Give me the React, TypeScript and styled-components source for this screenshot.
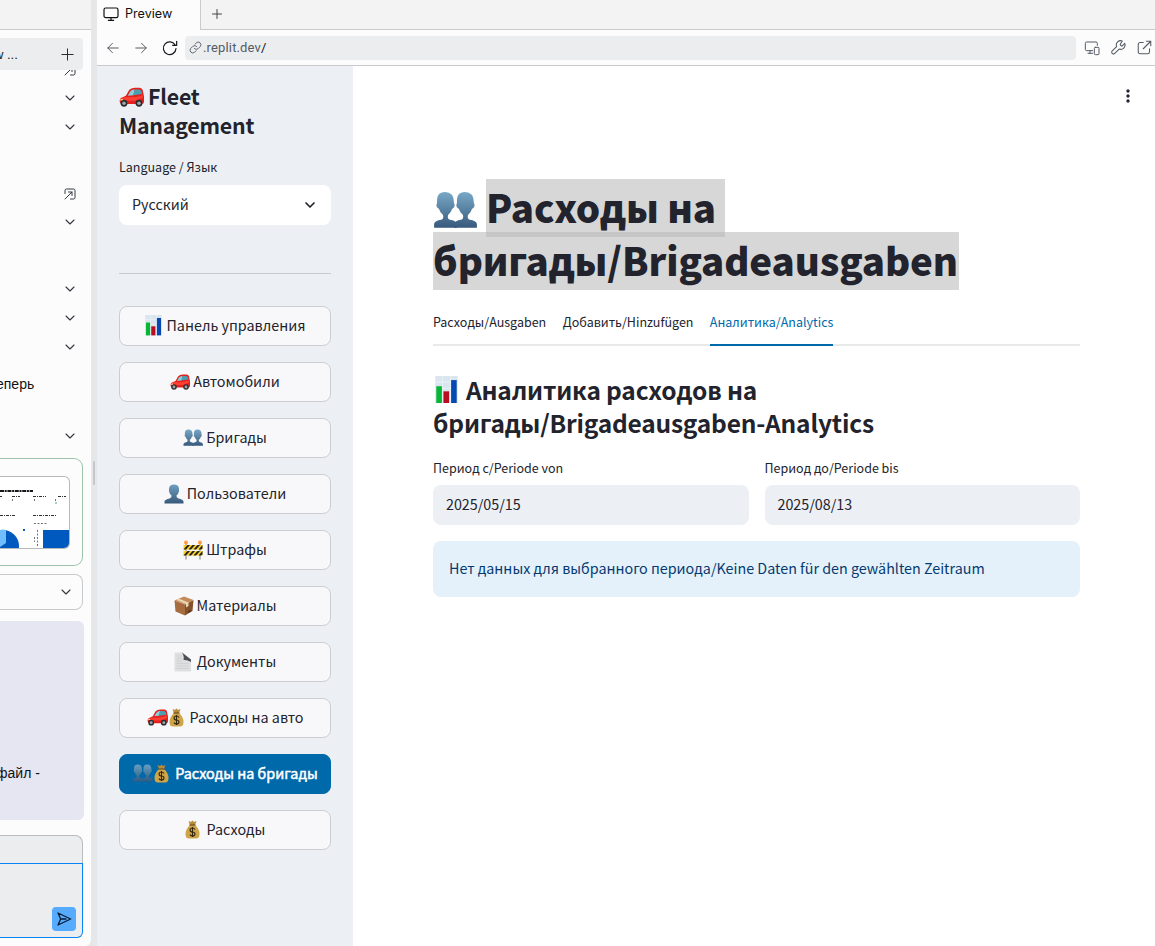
import React from "react";
import styled, { createGlobalStyle, css } from "styled-components";

const sans = `"Noto Sans CJK SC", sans-serif`;

const Global = createGlobalStyle`
  * { box-sizing: border-box; }
  body { margin: 0; background: #fff; overflow: hidden; font-family: ${sans}; color: #22232c; }
  svg { display: block; flex: none; }
`;

const Page = styled.div`display: flex; width: 1155px; height: 946px; background: #e5e7e9; overflow: hidden;`;

/* Chat column */
const Chat = styled.aside`width: 91px; height: 946px; background: #fcfcfc; border-bottom-right-radius: 6px; display: flex; flex-direction: column; overflow: hidden; font-family: "Liberation Sans", sans-serif; color: #111;`;
const ChatTop = styled.div`height: 30px; background: #f3f3f3; border-bottom: 1px solid #c9cacb; flex: none;`;
const ChatHeader = styled.div`margin-top: 8px; width: 83px; height: 32px; flex: none; background: #ecedef; border-radius: 0 4px 4px 0; display: flex; align-items: center; justify-content: space-between; padding-right: 8px; font-size: 13px; color: #222;`;
const Clipped = styled.span`margin-left: -6px; white-space: nowrap;`;
const Feed = styled.div`display: flex; flex-direction: column; height: 388px; flex: none; overflow: hidden;`;
const FeedItem = styled.div<{ $top: number }>`margin-top: ${p => p.$top}px; height: 14px; flex: none; padding-right: 15px; display: flex; align-items: center; justify-content: flex-end; color: #333840;`;
const FeedText = styled.div`margin: 22px 0 0 -4px; height: 16px; flex: none; font-size: 14px; line-height: 16px; white-space: nowrap;`;
const Card = styled.div`width: 83px; height: 108px; flex: none; border: 1px solid #9dc4ab; border-left: 0; border-radius: 0 9px 9px 0; padding-top: 17px;`;
const Thumb = styled.div`width: 70px; height: 73px; border: 1px solid #b6b8ba; border-left: 0; border-radius: 0 6px 6px 0; background: #fff; overflow: hidden;`;
const Collapsed = styled.div`margin-top: 8px; width: 83px; height: 36px; flex: none; border: 1px solid #c9cacc; border-left: 0; border-radius: 0 8px 8px 0; display: flex; align-items: center; justify-content: flex-end; padding-right: 10px; color: #333840;`;
const Bubble = styled.div`margin-top: 11px; width: 84px; height: 199px; flex: none; background: #e6e5f2; border-radius: 0 6px 6px 0; padding-top: 144px; font-size: 14px; line-height: 16px; white-space: nowrap;`;
const BubbleText = styled.div`margin-left: -4px;`;
const Attach = styled.div`margin-top: 15px; width: 83px; height: 28px; flex: none; background: #ecedef; border: 1px solid #b9bbbd; border-width: 1px 1px 0 0; border-radius: 0 8px 0 0;`;
const Composer = styled.div`width: 83px; height: 75px; flex: none; background: #ecedef; border: 1px solid #0a84f5; border-left: 0; border-radius: 0 0 6px 0; display: flex; align-items: flex-end; justify-content: flex-end; padding: 0 6px 6px 0;`;
const Send = styled.div`width: 24px; height: 24px; border-radius: 4px; background: #57abff; display: grid; place-items: center; color: #0c1b30;`;

const Gutter = styled.div`width: 6px; height: 946px; flex: none; display: flex; align-items: center; justify-content: center;`;
const Grip = styled.i`width: 2px; height: 24px; border-radius: 1px; background: #c5c7ca;`;

/* Preview window */
const Preview = styled.section`flex: 1; display: flex; flex-direction: column; min-width: 0; background: #fff;`;
const TabStrip = styled.div`height: 30px; display: flex; background: #f3f3f3; flex: none; font-family: Inter, sans-serif; font-size: 12.6px; color: #111;`;
const WindowTab = styled.div`width: 104px; height: 30px; background: #fcfcfc; border-right: 1px solid #c9cacb; display: flex; align-items: center; padding: 0 0 3px 6px; gap: 6px;`;
const StripRest = styled.div`flex: 1; border-bottom: 1px solid #c9cacb; display: flex; padding: 8px 0 0 10px; color: #444;`;
const Toolbar = styled.div`height: 36px; flex: none; background: #fcfcfc; border-bottom: 1px solid #c9cacb; display: flex; align-items: center; color: #555b66;`;
const NavIcons = styled.div`width: 88px; display: flex; align-items: center; gap: 14px; padding-left: 9px;`;
const Address = styled.div`width: 891px; height: 24px; background: #ecedef; border-radius: 4px; display: flex; align-items: center; padding-left: 4px; gap: 1px; font: 400 13px Roboto, sans-serif; letter-spacing: .15px; color: #555b66;`;
const Slash = styled.b`font-weight: 400; color: #111;`;
const Tools = styled.div`display: flex; gap: 11px; padding-left: 8px;`;

const AppFrame = styled.div`display: flex; flex: 1; min-height: 0;`;
const Sidebar = styled.nav`width: 256px; background: #ecf0f5; padding: 15px 22px 0; display: flex; flex-direction: column; flex: none;`;
const Brand = styled.h2`margin: 0 0 18px; font-size: 21.3px; line-height: 29px; font-weight: 700; letter-spacing: -.2px;`;
const BrandRow = styled.div`display: flex; align-items: center; gap: 4px; height: 29px; white-space: nowrap;`;
const BrandIcon = styled.span`padding-top: 2px;`;
const Label = styled.div`font-size: 12.5px; line-height: 20px; height: 20px; white-space: nowrap;`;
const Select = styled.div`height: 40px; margin-top: 8px; background: #fff; border-radius: 8px; display: flex; align-items: center; justify-content: space-between; padding: 0 15px 0 13px; font-size: 14.3px; line-height: 38px;`;
const SelectValue = styled.span`height: 40px;`;
const Divider = styled.hr`width: 100%; border: 0; height: 1px; background: #c8ccd1; margin: 48px 0 32px;`;
const Menu = styled.div`display: flex; flex-direction: column; gap: 16px;`;
const MenuButton = styled.button<{ $active?: boolean; $gap?: number }>`
  height: 40px; width: 212px; padding: 0 0 1px; border-radius: 8px; border: 1px solid #cccdd1; background: #f8f8fb; color: #22232c;
  display: flex; align-items: center; justify-content: center; gap: ${p => p.$gap ?? 3}px; font: 400 14.35px/24px ${sans}; white-space: nowrap;
  ${p => p.$active && css`background: #0069aa; border-color: #0069aa; color: #fff; -webkit-text-stroke: .5px #fff;`}
`;
const ButtonText = styled.span`padding-bottom: 1px;`;
const Emojis = styled.span`display: flex; align-items: center; gap: 1px;`;

const Main = styled.main`flex: 1; padding: 113px 75px 0 80px; position: relative; min-width: 0;`;
const More = styled.div`position: absolute; right: 24px; top: 22px;`;
const Title = styled.h1`margin: 0; font-size: 38.4px; font-weight: 900; height: 111px;`;
const TitleLine = styled.div`display: flex; height: 53px; white-space: nowrap;`;
const TitleIcon = styled.span`width: 53px; padding-top: 12px;`;
const Selected = styled.span<{ $w: number; $joined?: boolean }>`
  width: ${p => p.$w}px; height: 58px; line-height: 54px; flex: none; letter-spacing: -.13px;
  background: ${p => p.$joined ? "linear-gradient(rgba(0,0,0,.157) 53px, rgba(0,0,0,.08) 53px)" : "rgba(0,0,0,.157)"};
`;
const Tabs = styled.div`display: flex; gap: 16.4px; border-bottom: 2px solid #e8e9eb; height: 40px; margin-top: 16px;`;
const Tab = styled.div<{ $active?: boolean }>`font-size: 12.5px; height: 40px; line-height: 32px; white-space: nowrap; border-bottom: 2px solid ${p => (p.$active ? "#0069aa" : "transparent")}; color: ${p => (p.$active ? "#0069aa" : "inherit")};`;
const Section = styled.h3`margin: 27px 0 0; font-size: 24.5px; line-height: 33px; font-weight: 700; white-space: nowrap; letter-spacing: -.19px;`;
const SectionRow = styled.div`display: flex; align-items: center; gap: 8px; height: 33px;`;
const SectionIcon = styled.span`padding-left: 2px;`;
const Fields = styled.div`display: grid; grid-template-columns: 1fr 1fr; gap: 16px; margin-top: 19px;`;
const Input = styled.div`margin-top: 7px; height: 40px; background: #eceff4; border-radius: 8px; padding: 0 13px; line-height: 37px; font-size: 14.3px;`;
const Alert = styled.div`margin-top: 16px; height: 56px; border-radius: 8px; background: #e4f1fb; color: #043a70; padding: 0 16px; line-height: 53px; font-size: 14.32px; white-space: nowrap;`;

/* Line icons */
type IconProps = { size?: number; w?: number; children: React.ReactNode };
const Line = ({ size = 16, w = 1.5, children }: IconProps) => (
  <svg width={size} height={size} viewBox="0 0 24 24" fill="none" stroke="currentColor" strokeWidth={w} strokeLinecap="round" strokeLinejoin="round">{children}</svg>
);
const Chevron = ({ size = 12, w = 2.2 }) => <Line size={size} w={w}><path d="M4 8l8 8 8-8" /></Line>;
const Plus = ({ size = 16, w = 1.5 }) => <Line size={size} w={w}><path d="M12 3v18M3 12h18" /></Line>;
const OpenBox = () => <Line size={12} w={2}><path d="M2 11V5a3 3 0 0 1 3-3h14a3 3 0 0 1 3 3v14a3 3 0 0 1-3 3h-6M9 8h7v7M16 8L2 22" /></Line>;

/* Colour icons */
const Car = ({ s = 20 }) => (
  <svg width={s} height={s * 0.8} viewBox="0 0 40 32">
    <path d="M1 22q0-4 3-5l7-3 5-9q3-4 10-4h7q4 0 5 4l2 10v9q0 3-4 3H5q-4 0-4-5z" fill="#e3201c" />
    <path d="M2 20q1-3 10-4 10 2 26-3v4l-12 5H2z" fill="#ff3f34" />
    <path d="M14 14l4-7q2-3 6-3h1l-2 9z" fill="#8ad0d9" /><path d="M25 4h7q3 0 4 3l1 4-14 2z" fill="#4b9fb3" />
    <circle cx="8" cy="26" r="5.500" fill="#292c31" /><circle cx="8" cy="26" r="2.800" fill="#9fa5aa" />
    <circle cx="32" cy="26" r="5.500" fill="#292c31" /><circle cx="32" cy="26" r="2.800" fill="#9fa5aa" />
    <path d="M2 20l4-1v2H1z" fill="#fff0a8" />
  </svg>
);
const Chart = ({ s = 18 }) => (
  <svg width={s} height={s * 1.2} viewBox="0 0 22 27">
    <path d="M0 0h22v27H0z" fill="#d9e6ef" /><path d="M0 6h22M0 12h22M0 18h22M7 0v26M15 0v26" stroke="#e8f1f6" />
    <path d="M1 10h5.500v17H1z" fill="#08b536" /><path d="M8 15h5.500v12H8z" fill="#b90d22" /><path d="M15.500 4H21v23h-5.500z" fill="#0749b2" />
  </svg>
);
const pairShape = "M1 37v-4q1-3 7-4 3-1 2-5-3-2-4-6-4-2-2-6Q3 1 12 1t9 11q2 4-2 6-1 4-4 6-1 4 2 5 6 1 7 4v4z";
const Person = ({ s = 20 }) => (
  <svg width={s} height={s} viewBox="0 0 40 40">
    <defs><linearGradient id="bustFill" x2="0" y2="1"><stop stopColor="#6f9fbe" /><stop offset="1" stopColor="#38597c" /></linearGradient></defs>
    <path d="M1 39v-4q1-4 10-6 5-2 4-6-6-5-5-14Q11 1 20 1t10 8q1 9-5 14-1 4 4 6 9 2 10 6v4z" fill="url(#bustFill)" />
  </svg>
);
const People = ({ s = 20, dim = false }) => (
  <svg width={s} height={s * 0.86} viewBox="0 0 44 38" opacity={dim ? 0.85 : 1}>
    <defs><linearGradient id="pairFill" x2="0" y2="1"><stop stopColor="#78a9c6" /><stop offset="1" stopColor="#38597c" /></linearGradient></defs>
    <path d={pairShape} transform="translate(20 0)" fill="url(#pairFill)" /><path d={pairShape} fill="url(#pairFill)" />
  </svg>
);
const Barrier = () => (
  <svg width="20" height="20" viewBox="0 0 40 40">
    <path d="M6 8v31M34 8v31" stroke="#a4a6a8" strokeWidth="3" />
    <circle cx="6" cy="5" r="4" fill="#ff9b3c" /><circle cx="34" cy="5" r="4" fill="#ff9b3c" />
    <path d="M1 10h38v9H1zM1 22h38v9H1z" fill="#f7cd28" />
    <path d="M1 19l8-9h5l-8 9zM11 19l8-9h5l-8 9zM21 19l8-9h5l-8 9zM31 19l8-9v7l-3 2zM1 31l8-9h5l-8 9zM11 31l8-9h5l-8 9zM21 31l8-9h5l-8 9zM31 31l8-9v7l-3 2z" fill="#202020" />
  </svg>
);
const Box = () => (
  <svg width="20" height="20" viewBox="0 0 40 40">
    <path d="M1 9l21 8v22L3 31z" fill="#a66b3e" /><path d="M22 17l17-9-2 22-15 9z" fill="#85502c" /><path d="M1 9l19-8 19 7-17 9z" fill="#c48a58" />
    <path d="M9 5l20 8v7l-5 3v-7L5 8z" fill="#ead5b4" /><path d="M28 30l6-3v4l-6 3z" fill="#5d3519" />
  </svg>
);
const Doc = () => (
  <svg width="18" height="20" viewBox="0 0 36 40">
    <path d="M1 1h16l17 18v20H1z" fill="#dedfe0" /><path d="M16 1q5 8 3 15 7-1 15 4V15z" fill="#4c5055" />
    <path d="M5 8h10M5 13h11M5 18h12M5 23h24M5 28h24M5 33h24" stroke="#cbcdcf" strokeWidth="1.500" />
  </svg>
);
const Bag = () => (
  <svg width="15" height="19" viewBox="0 0 30 38">
    <path d="M7 2l5 2 3-3 3 3 5-2-3 8H10z" fill="#b88b38" /><path d="M10 10h10q9 8 9 18 0 9-7 9H8q-7 0-7-9 0-10 9-18z" fill="#cfa548" />
    <path d="M9 10h12" stroke="#76511b" strokeWidth="2.500" />
    <path d="M20 19q-2-3-5-3-5 0-5 4t5 4 5 4-5 4q-4 0-5-3M15 14v20" fill="none" stroke="#33260f" strokeWidth="2.200" />
  </svg>
);

const Dashboard = () => (
  <svg width="69" height="71" viewBox="0 0 69 71">
    <g fill="none" stroke="#15171a">
      <path d="M0 14h33" strokeWidth="1.800" strokeDasharray="4 .7 2 .7" />
      <path d="M0 19.500h2M12 19.500h8M33 19.500h13M58 19.500h8M0 38.500h16M33 38.500h24" strokeWidth=".9" strokeDasharray="3 1 1 1" />
      <path d="M12.500 22v3M34.500 22v3M55.500 22v3M34 46.500h13M37.500 53v16M34.500 60v5" strokeWidth=".6" strokeDasharray="2 1.500" />
    </g>
    <path d="M55 26h2" stroke="#49a568" /><path d="M23 52h2v2h-2z" fill="#0b62c4" />
    <circle cx="3" cy="69" r="16" fill="#0059bf" /><path d="M0 53q3-1 6 0v13l-6 4z" fill="#70bdff" /><path d="M43 53h26v18H43z" fill="#0059bf" />
  </svg>
);

const items: { text: string; icon: React.ReactNode; gap?: number; active?: boolean }[] = [
  { text: "Панель управления", icon: <Chart s={17} />, gap: 5 },
  { text: "Автомобили", icon: <Car /> },
  { text: "Бригады", icon: <People /> },
  { text: "Пользователи", icon: <Person /> },
  { text: "Штрафы", icon: <Barrier /> },
  { text: "Материалы", icon: <Box /> },
  { text: "Документы", icon: <Doc />, gap: 5 },
  { text: "Расходы на авто", icon: <><Car s={21} /><Bag /></>, gap: 6 },
  { text: "Расходы на бригады", icon: <><People dim s={21} /><Bag /></>, gap: 6, active: true },
  { text: "Расходы", icon: <Bag />, gap: 7 },
];

export default function App() {
  return (
    <Page>
      <Global />
      <Chat>
        <ChatTop />
        <ChatHeader><Clipped>w ...</Clipped><Plus size={15} /></ChatHeader>
        <Feed>
          <FeedItem $top={-7}><OpenBox /></FeedItem>
          <FeedItem $top={14}><Chevron /></FeedItem>
          <FeedItem $top={15}><Chevron /></FeedItem>
          <FeedItem $top={53}><OpenBox /></FeedItem>
          <FeedItem $top={14}><Chevron /></FeedItem>
          <FeedItem $top={53}><Chevron /></FeedItem>
          <FeedItem $top={15}><Chevron /></FeedItem>
          <FeedItem $top={15}><Chevron /></FeedItem>
          <FeedText>еперь</FeedText>
          <FeedItem $top={37}><Chevron /></FeedItem>
        </Feed>
        <Card><Thumb><Dashboard /></Thumb></Card>
        <Collapsed><Chevron /></Collapsed>
        <Bubble><BubbleText>файл -</BubbleText></Bubble>
        <Attach />
        <Composer><Send><Line size={16} w={2}><path d="M3 3l19 9-19 9 4-9zM7 12h8" /></Line></Send></Composer>
      </Chat>
      <Gutter><Grip /></Gutter>
      <Preview>
        <TabStrip>
          <WindowTab>
            <Line size={16} w={1.8}><rect x="1.500" y="3" width="21" height="14.500" rx="2.500" /><path d="M12 18v3M8 21.500h8" /></Line>
            Preview
          </WindowTab>
          <StripRest><Plus size={12} w={2} /></StripRest>
        </TabStrip>
        <Toolbar>
          <NavIcons>
            <Line size={14} w={1.7}><path d="M21 12H3M11 4l-8 8 8 8" /></Line>
            <Line size={14} w={1.7}><path d="M3 12h18M13 4l8 8-8 8" /></Line>
            <Line size={16} w={1.8}><path d="M20 8a9.500 9.500 0 1 0 1 5M22 2v6h-6" stroke="#15181d" /></Line>
          </NavIcons>
          <Address>
            <Line size={13} w={1.7}><path d="M10 14a5 5 0 0 0 7 0l4-4a5 5 0 0 0-7-7l-3 3M14 10a5 5 0 0 0-7 0l-4 4a5 5 0 0 0 7 7l3-3" /></Line>
            <span>.replit.dev<Slash>/</Slash></span>
          </Address>
          <Tools>
            <Line size={16}><path d="M13 16H4a2 2 0 0 1-2-2V5a2 2 0 0 1 2-2h14a2 2 0 0 1 2 2v3M9 16v4M6 20h7M17 11h4a1.500 1.500 0 0 1 1.500 1.500v8A1.500 1.500 0 0 1 21 22h-4a1.500 1.500 0 0 1-1.500-1.500v-8A1.500 1.500 0 0 1 17 11z" /></Line>
            <Line size={15} w={1.7}><path d="M15 6.500a1 1 0 0 0 0 1.500l1.500 1.500a1 1 0 0 0 1.500 0l4-4a7 7 0 0 1-9 9l-7 7a2.500 2.500 0 0 1-4-4l7-7a7 7 0 0 1 9-9z" /></Line>
            <Line size={15} w={1.7}><path d="M20 14v5a3 3 0 0 1-3 3H5a3 3 0 0 1-3-3V7a3 3 0 0 1 3-3h5M15 2h7v7M22 2L10 14" /></Line>
          </Tools>
        </Toolbar>
        <AppFrame>
          <Sidebar>
            <Brand><BrandRow><BrandIcon><Car s={25} /></BrandIcon>Fleet</BrandRow><BrandRow>Management</BrandRow></Brand>
            <Label>Language / Язык</Label>
            <Select><SelectValue>Русский</SelectValue><Chevron size={12} w={3.4} /></Select>
            <Divider />
            <Menu>{items.map(i => <MenuButton key={i.text} $gap={i.gap} $active={i.active}><Emojis>{i.icon}</Emojis><ButtonText>{i.text}</ButtonText></MenuButton>)}</Menu>
          </Sidebar>
          <Main>
            <More><svg width="6" height="16" viewBox="0 0 6 16" fill="#232630"><circle cx="3" cy="3" r="1.700" /><circle cx="3" cy="8" r="1.700" /><circle cx="3" cy="13" r="1.700" /></svg></More>
            <Title>
              <TitleLine><TitleIcon><People s={44} /></TitleIcon><Selected $w={239} $joined>Расходы на</Selected></TitleLine>
              <TitleLine><Selected $w={526}>бригады/Brigadeausgaben</Selected></TitleLine>
            </Title>
            <Tabs><Tab>Расходы/Ausgaben</Tab><Tab>Добавить/Hinzufügen</Tab><Tab $active>Аналитика/Analytics</Tab></Tabs>
            <Section><SectionRow><SectionIcon><Chart s={23} /></SectionIcon>Аналитика расходов на</SectionRow><SectionRow>бригады/Brigadeausgaben-Analytics</SectionRow></Section>
            <Fields>
              <div><Label>Период с/Periode von</Label><Input>2025/05/15</Input></div>
              <div><Label>Период до/Periode bis</Label><Input>2025/08/13</Input></div>
            </Fields>
            <Alert>Нет данных для выбранного периода/Keine Daten für den gewählten Zeitraum</Alert>
          </Main>
        </AppFrame>
      </Preview>
    </Page>
  );
}
